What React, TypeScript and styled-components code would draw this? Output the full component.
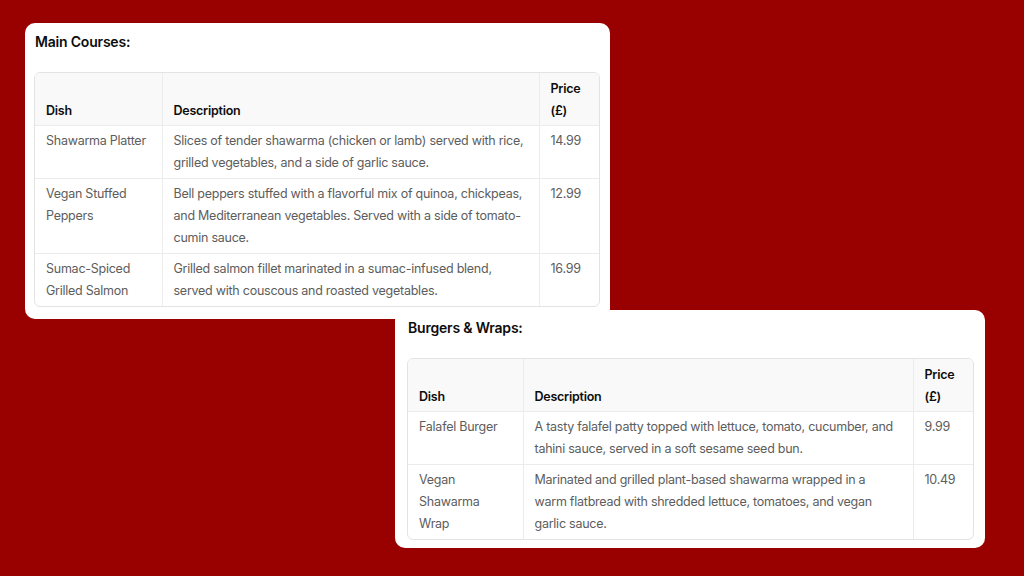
import React from 'react';
import styled, { createGlobalStyle } from 'styled-components';

const GlobalStyle = createGlobalStyle`
  html, body {
    margin: 0;
    padding: 0;
    background: #990000;
  }
`;

const Canvas = styled.div`
  width: 1024px;
  height: 576px;
  overflow: hidden;
  background: #990000;
  display: flex;
  flex-direction: column;
  align-items: flex-start;
  font-family: Inter, 'Liberation Sans', sans-serif;
`;

const Card = styled.section<{ $left: number; $top: number; $width: number; $pad: string }>`
  margin-left: ${p => p.$left}px;
  margin-top: ${p => p.$top}px;
  width: ${p => p.$width}px;
  box-sizing: border-box;
  padding: ${p => p.$pad};
  background: #fff;
  border-radius: 10px;
`;

const Title = styled.h3`
  margin: 0 0 21px 1px;
  font-size: 14px;
  line-height: 18px;
  font-weight: 600;
  color: #0d0d0d;
  letter-spacing: -0.2px;
`;

const TableWrap = styled.div`
  border: 1px solid #e3e3e3;
  border-radius: 6px;
  overflow: hidden;
`;

const Table = styled.table`
  width: 100%;
  border-collapse: collapse;
  table-layout: fixed;
  font-size: 12.5px;
  line-height: 22px;
  letter-spacing: -0.25px;
`;

const HeadCell = styled.th<{ $w: number }>`
  box-sizing: border-box;
  width: ${p => p.$w}px;
  text-align: left;
  vertical-align: bottom;
  padding: 5px 14px 3px 11px;
  background: #f9f9f9;
  color: #0d0d0d;
  font-weight: 600;
  border-bottom: 1px solid #ececec;
  border-left: 1px solid #ececec;
  &:first-child {
    border-left: none;
  }
`;

const Row = styled.tr`
  &:not(:last-child) td {
    border-bottom: 1px solid #ececec;
  }
`;

const Cell = styled.td`
  vertical-align: top;
  padding: 4px 14px 4px 11px;
  color: #5d5d5d;
  border-left: 1px solid #ececec;
  &:first-child {
    border-left: none;
  }
`;

type Dish = { name: string; desc: string; price: string };

const mains: Dish[] = [
  {
    name: 'Shawarma Platter',
    desc: 'Slices of tender shawarma (chicken or lamb) served with rice, grilled vegetables, and a side of garlic sauce.',
    price: '14.99',
  },
  {
    name: 'Vegan Stuffed Peppers',
    desc: 'Bell peppers stuffed with a flavorful mix of quinoa, chickpeas, and Mediterranean vegetables. Served with a side of tomato-cumin sauce.',
    price: '12.99',
  },
  {
    name: 'Sumac-Spiced Grilled Salmon',
    desc: 'Grilled salmon fillet marinated in a sumac-infused blend, served with couscous and roasted vegetables.',
    price: '16.99',
  },
];

const burgers: Dish[] = [
  {
    name: 'Falafel Burger',
    desc: 'A tasty falafel patty topped with lettuce, tomato, cucumber, and tahini sauce, served in a soft sesame seed bun.',
    price: '9.99',
  },
  {
    name: 'Vegan Shawarma Wrap',
    desc: 'Marinated and grilled plant-based shawarma wrapped in a warm flatbread with shredded lettuce, tomatoes, and vegan garlic sauce.',
    price: '10.49',
  },
];

const MenuTable: React.FC<{ items: Dish[]; cols: [number, number, number] }> = ({ items, cols }) => (
  <TableWrap>
    <Table>
      <thead>
        <tr>
          <HeadCell $w={cols[0]}>Dish</HeadCell>
          <HeadCell $w={cols[1]}>Description</HeadCell>
          <HeadCell $w={cols[2]}>Price (£)</HeadCell>
        </tr>
      </thead>
      <tbody>
        {items.map(d => (
          <Row key={d.name}>
            <Cell>{d.name}</Cell>
            <Cell>{d.desc}</Cell>
            <Cell>{d.price}</Cell>
          </Row>
        ))}
      </tbody>
    </Table>
  </TableWrap>
);

const App: React.FC = () => (
  <>
    <GlobalStyle />
    <Canvas>
      <Card $left={25} $top={23} $width={585} $pad="10px 10px 12px 9px">
        <Title>Main Courses:</Title>
        <MenuTable items={mains} cols={[127, 377, 62]} />
      </Card>
      <Card $left={395} $top={-9} $width={590} $pad="9px 11px 8px 12px">
        <Title>Burgers &amp; Wraps:</Title>
        <MenuTable items={burgers} cols={[115, 390, 62]} />
      </Card>
    </Canvas>
  </>
);

export default App;
